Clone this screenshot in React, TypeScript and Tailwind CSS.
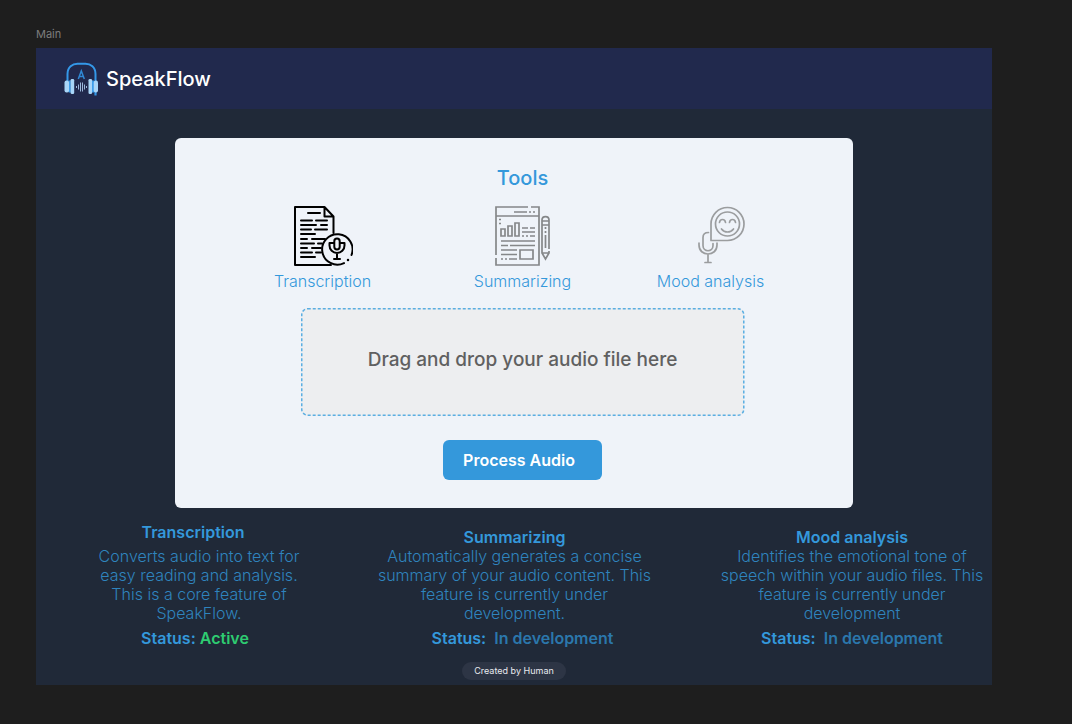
import type { ReactNode } from "react";

function Logo() {
  return (
    <svg className="h-9 w-9" viewBox="0 0 36 36" fill="none" aria-hidden="true">
      <path d="M4.500 20V13C4.500 6 9.500 2.800 14.500 2.800h8C27.500 2.800 32.500 6 32.500 13v7" stroke="#3498e8" strokeWidth="2" />
      <path d="M6.700 19.500v12M30 19.500v12M32.500 31v3.500" stroke="#3498e8" strokeWidth="2.200" />
      <g fill="#a9d6f8">
        <rect x="1.500" y="19.500" width="4.600" height="12" rx="2" />
        <rect x="7.600" y="18" width="3.600" height="15" rx="1.300" />
        <rect x="25.500" y="18" width="3.600" height="15" rx="1.300" />
        <rect x="30.700" y="19.500" width="4.300" height="12" rx="2" />
      </g>
      <path d="M15.300 18 18.300 10 21.300 18M16.500 15.500h3.600" stroke="#3088d4" strokeWidth="1.500" />
      <path d="M13.500 25v2M15.500 23.500v5M17.500 21.500v9M19.500 21.500v9M21.500 23.500v5M23.500 25v2" stroke="#9db8dc" strokeWidth="1" />
    </svg>
  );
}

function TranscriptionIcon() {
  return (
    <svg className="h-[60px] w-[60px]" viewBox="0 0 60 60" fill="none" stroke="#000" strokeWidth="2" strokeLinecap="round" strokeLinejoin="round" aria-hidden="true">
      <path d="M40.500 27V10.500L31.500 1H2v58h36M31.500 1v9.500H40.500" />
      <path d="M15 7h12M8 14.500h11M23 14.500h11M8 19h15M28 19h6M8 23.500h10M22 23.500h12M8 28h14M8 33h6M19 33h13M8 37.500h13M25 37.500h4M8 42h6M19 42h9M8 46.500h11M23 46.500h5M8 51h14" />
      <path d="M51 57.100A15.200 15.200 0 1 1 58.500 49" />
      <path d="M55 54v.1" strokeWidth="2.500" />
      <rect x="41.300" y="32.500" width="5.400" height="11" rx="2.700" />
      <path d="M41 37h-4.500v2.500a7.500 7.500 0 0 0 15 0V37H47M44 47.500v5.500M41 53h6" />
    </svg>
  );
}

function SummarizingIcon() {
  return (
    <svg className="h-[60px] w-[60px]" viewBox="0 0 60 60" fill="none" stroke="#858789" strokeWidth="1.700" aria-hidden="true">
      <path d="M35 1H3v48M3 52v7h43V1h-8M3 10h43" />
      <path d="M21 6h13M36 6h2M40 6h2M6 13.500h2M6 17.500h2" />
      <path d="M8 23h4v7H8zM15 20h4v10h-4zM22 17h4v13h-4z" />
      <path d="M29 22h6M37 22h5M29 26h13M29 30h2M33 30h2M37 30h5M8 35h34M8 39.500h7M17 39.500h25M8 44h16M8 48.500h16M8 53h2M12 53h2M16 53h8" />
      <path d="M27 44h13v9H27zM56 43V14c0-4.500-7-4.500-7 0v33l3.500 6 3.500-6v-2M49 15h7M49 19h7M49 47h7M52.500 21v2M52.500 25v2M52.500 29v13" />
    </svg>
  );
}

function MoodIcon() {
  return (
    <svg className="ml-3 h-[60px] w-[60px]" viewBox="0 0 60 60" fill="none" stroke="#9b9d9f" strokeWidth="1.700" strokeLinecap="round" aria-hidden="true">
      <path d="M24 34V18a16.500 16.500 0 1 1 16.500 16.500H24z" strokeLinejoin="round" />
      <circle cx="40.500" cy="18" r="12" />
      <path d="M32.500 16.500c.5-4 5.500-4 6 0M42.500 16.500c.5-4 5.500-4 6 0M34.500 23c3 4 9 4 12 0" />
      <path d="M21.500 26.500c-3.500 0-5.500 2-5.500 5v8c0 7 10 7 10 0v-2M12 37v2c0 12 18 12 18 0v-2M21 48.500V56M18 56.500h6" />
    </svg>
  );
}

function Tool({ label, children, className }: { label: string; children: ReactNode; className: string }) {
  return (
    <button type="button" className={`flex flex-col items-center text-base leading-5 font-light text-[#3498db] ${className}`}>
      {children}
      <span className="mt-[5px] whitespace-nowrap">{label}</span>
    </button>
  );
}

type FeatureProps = {
  title: string;
  text: string;
  status: string;
  className: string;
  titleClass: string;
  statusClass: string;
  valueClass: string;
};

function Feature({ title, text, status, className, titleClass, statusClass, valueClass }: FeatureProps) {
  return (
    <section className={`flex flex-col items-center text-center text-base leading-[19px] text-[#3498db] ${className}`}>
      <h2 className={`font-semibold ${titleClass}`}>{title}</h2>
      <p className="grow font-light text-[#2f84be]">{text}</p>
      <p className={`mt-1.5 font-semibold whitespace-pre ${statusClass}`}>
        Status: <span className={valueClass}>{status}</span>
      </p>
    </section>
  );
}

export default function App() {
  return (
    <div className="min-h-screen bg-[#1e1e1e] pt-[27px] pr-20 pb-[39px] pl-9 font-['Inter',sans-serif]">
      <p className="h-[21px] text-[11px] leading-[14px] text-[#7c7c7c]">Main</p>
      <div className="bg-[#202938]">
        <header className="flex h-[61px] items-center gap-[7px] bg-[#21294d] pl-[27px]">
          <Logo />
          <h1 className="text-xl font-medium text-white">SpeakFlow</h1>
        </header>
        <main>
          <div className="mx-auto mt-[29px] flex w-[71%] flex-col items-center rounded-md bg-[#eff3f9] pt-[27px] pb-7 pl-[17px]">
            <h2 className="text-xl leading-[26px] font-medium text-[#3498db]">Tools</h2>
            <div className="mt-[15px] flex justify-center pr-6">
              <Tool label="Transcription" className="w-[200px]"><TranscriptionIcon /></Tool>
              <Tool label="Summarizing" className="w-[200px]"><SummarizingIcon /></Tool>
              <Tool label="Mood analysis" className="w-[176px]"><MoodIcon /></Tool>
            </div>
            <div className="relative mt-[17px] flex h-[108px] w-[67%] items-center justify-center rounded-md bg-[#edeef0] pb-1 text-[19px] font-medium text-[#606060]">
              <svg className="absolute inset-0 h-full w-full overflow-visible" fill="none" aria-hidden="true">
                <rect x="0.750" y="0.750" width="99.700%" height="98.600%" rx="6" stroke="#5aaee2" strokeWidth="1.500" strokeDasharray="3 2" />
              </svg>
              Drag and drop your audio file here
            </div>
            <button type="button" className="mt-6 h-10 rounded-md bg-[#3498db] pr-[27px] pl-5 text-base font-semibold text-white">Process Audio</button>
          </div>
          <div className="flex items-stretch justify-between pt-[15px] pr-[7px] pl-[52px]">
            <Feature title="Transcription" text="Converts audio into text for easy reading and analysis. This is a core feature of SpeakFlow." status="Active" className="w-[222px]" titleClass="pr-3 pb-[5px]" statusClass="pr-2" valueClass="text-[#2ecc71]" />
            <Feature title="Summarizing" text="Automatically generates a concise summary of your audio content. This feature is currently under development." status="In development" className="w-[282px]" titleClass="pt-[5px]" statusClass="pl-4" valueClass="pl-1 text-[#2b77ac]" />
            <Feature title="Mood analysis" text="Identifies the emotional tone of speech within your audio files. This feature is currently under development" status="In development" className="w-[266px]" titleClass="pt-[5px]" statusClass="" valueClass="pl-1 text-[#2b77ac]" />
          </div>
        </main>
        <footer className="flex justify-center pt-3.5 pb-[5px]">
          <p className="rounded-full bg-[#2d3545] px-3 text-[9px] leading-[18px] text-[#e8eaef]">Created by Human</p>
        </footer>
      </div>
    </div>
  );
}
